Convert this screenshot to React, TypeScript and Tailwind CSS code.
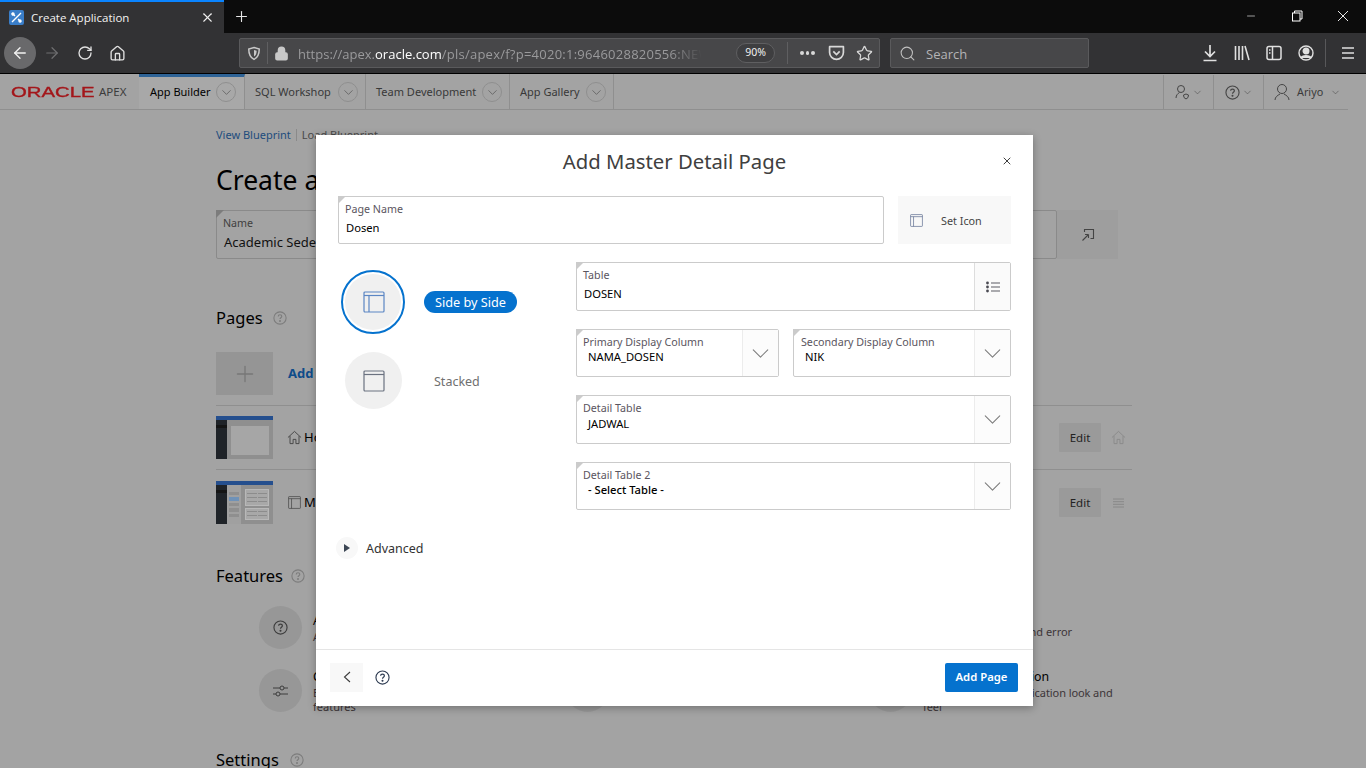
import React from "react";
import { ArrowLeft, ArrowRight, RotateCw, Home, Lock, Search, Star, Plus, X, ChevronDown, Minus } from "lucide-react";

const LayoutIcon = ({ side = true, size = 22, color = "#5f7fb3", className = "" }: { side?: boolean; size?: number; color?: string; className?: string }) => (
  <svg width={size} height={size} viewBox="0 0 22 22" fill="none" stroke={color} strokeWidth="1.2" className={className}>
    <rect x="1" y="1" width="20" height="20" rx="1" />
    <path d="M1 4.500h20" />
    {side && <path d="M6 4.500V21" />}
  </svg>
);

const HelpIcon = ({ size = 16, color = "#3f4a5a", className = "" }: { size?: number; color?: string; className?: string }) => (
  <svg width={size} height={size} viewBox="0 0 16 16" fill="none" stroke={color} strokeWidth="1.2" className={className}>
    <circle cx="8" cy="8" r="7" />
    <path d="M6 6.200c0-1.200 1-1.900 2-1.900s2 .7 2 1.800c0 1.500-2 1.600-2 3.100" strokeWidth="1.300" />
    <circle cx="8" cy="11.500" r=".5" fill={color} />
  </svg>
);

const HomeOutline = ({ color, size = 15 }: { color: string; size?: number }) => (
  <svg width={size} height={size} viewBox="0 0 16 16" fill="none" stroke={color} strokeWidth="1">
    <path d="M1 8l7-6.500L15 8M3.200 6.500V14.500h3.300V10h3v4.500h3.300V6.500" />
  </svg>
);

const Field = ({ label, value, indent = 1, className = "", select = false, list = false, valueGap = 4, labelX = 6, medium = false }: { label: string; value: string; indent?: number; className?: string; select?: boolean; list?: boolean; valueGap?: number; labelX?: number; medium?: boolean }) => (
  <div className={`relative flex border border-[#cbcbcb] rounded-[2px] bg-white ${className}`}>
    <span className="absolute -left-px -top-px w-0 h-0 border-t-[8px] border-r-[8px] border-t-[#cbcbcb] border-r-transparent" />
    <div className="flex-1 min-w-0" style={{ paddingLeft: labelX }}>
      <div className="text-[10.700px] leading-[14px] text-[#5a5560] mt-[5px] whitespace-nowrap">{label}</div>
      <div className={`text-[11.200px] leading-[16px] text-black whitespace-nowrap ${medium ? "font-medium" : "font-normal"}`} style={{ marginLeft: indent, marginTop: valueGap }}>{value}</div>
    </div>
    {select && (
      <div className="w-[36px] shrink-0 border-l border-[#ececec] bg-[#fcfcfc] flex items-center justify-center">
        <ChevronDown size={29} strokeWidth={0.85} color="#7a7a7a" />
      </div>
    )}
    {list && (
      <div className="w-[36px] shrink-0 border-l border-[#dddddd] bg-[#fafafa] flex items-center justify-center">
        <svg width="14" height="12" viewBox="0 0 14 12" fill="none">
          <circle cx="1.500" cy="2" r="1.400" fill="#4a4a52" /><circle cx="1.500" cy="6" r="1.400" fill="#4a4a52" /><circle cx="1.500" cy="10" r="1.400" fill="#4a4a52" />
          <path d="M5 2h9M5 6h9M5 10h9" stroke="#5a5a62" strokeWidth="1" />
        </svg>
      </div>
    )}
  </div>
);

const NavTab = ({ label, active = false, w }: { label: string; active?: boolean; w: string }) => (
  <div className={`flex items-center border-r border-[#8f8f8f] ${w} h-full pl-[10px] pb-[2px] ${active ? "border-t-[3px] border-t-[#2e6396] bg-[#a8a8a8]" : "pt-[3px]"}`}>
    <span className={`text-[11px] whitespace-nowrap ${active ? "text-black" : "text-[#383838]"}`}>{label}</span>
    <span className={`ml-auto ${active ? "mr-[8px]" : "mr-[7px]"} w-[20px] h-[20px] rounded-full border border-[#8f8f8f] flex items-center justify-center`}>
      <ChevronDown size={15} strokeWidth={1} color="#4a4a4a" />
    </span>
  </div>
);

const Feature = ({ icon, title, desc, w, shift = "" }: { icon: React.ReactNode; title: string; desc: React.ReactNode; w: string; shift?: string }) => (
  <div className={`flex items-center h-[43px] ${w}`}>
    <div className="w-[43px] h-[43px] rounded-full bg-[#979797] flex items-center justify-center shrink-0">{icon}</div>
    <div className={`ml-[11px] pt-[2px] text-[11px] leading-[14px] text-[#3d3538] ${shift}`}>
      <div className="text-[12.300px] leading-[16px] mb-[1px] text-black whitespace-nowrap">{title}</div>
      <div className="whitespace-nowrap">{desc}</div>
    </div>
  </div>
);

const TableBox = ({ rows }: { rows: number }) => (
  <div className="bg-[#a8a8a8] border border-[#b8b8b8] p-[1px] flex flex-col justify-around" style={{ flex: rows }}>
    {Array.from({ length: rows }).map((_, i) => (
      <div key={i} className="flex gap-[1px]"><i className="flex-1 h-px bg-[#8c8c8c]" /><i className="flex-1 h-px bg-[#8c8c8c]" /></div>
    ))}
  </div>
);

const Thumb = ({ detail = false }: { detail?: boolean }) => (
  <div className="w-[57px] h-[43px] flex flex-col shrink-0 bg-[#8f8f8f]">
    <div className="h-[4px] bg-[#254f8e]" />
    <div className="flex flex-1">
      <div className="w-[11px] bg-[#1f2328] pt-[5px]"><div className="h-[3px] bg-[#141414]" /></div>
      {detail ? (
        <div className="flex-1 flex bg-[#9a9a9a]">
          <div className="w-[14px] bg-[#a0a0a0] px-[2px] pt-[7px] flex flex-col gap-[2px]">
            <div className="h-[3px] bg-[#8f8f8f]" /><div className="h-[4px] bg-[#6f92b8]" /><div className="h-[3px] bg-[#8f8f8f]" /><div className="h-[4px] bg-[#8f8f8f]" /><div className="h-[3px] bg-[#8f8f8f]" />
          </div>
          <div className="flex-1 p-[4px] flex flex-col gap-[2px] bg-[#8f8f8f]">
            <TableBox rows={3} />
            <TableBox rows={2} />
          </div>
        </div>
      ) : (
        <div className="flex-1 p-[4px] pt-[6px]"><div className="h-full bg-[#a6a6a6]" /></div>
      )}
    </div>
  </div>
);

export default function App() {
  return (
    <div className="w-[1366px] h-[768px] overflow-hidden relative bg-[#a3a3a3]" style={{ fontFamily: '"Noto Sans", sans-serif' }}>
      {/* Tab strip */}
      <div className="h-[33px] bg-[#0c0c0c] flex items-stretch">
        <div className="w-[224px] bg-[#323234] border-t-2 border-[#0a84ff] flex items-center pl-[9px]">
          <span className="w-[15px] h-[15px] bg-[#3a7ec9] rounded-[2px] flex items-center justify-center">
            <svg width="13" height="13" viewBox="0 0 13 13" fill="none" stroke="#fff" strokeWidth="1.400"><path d="M2 11L11 2M2 2l3 3M8 8l3 3" /><circle cx="3" cy="3" r="1" /><circle cx="10" cy="10" r="1" /></svg>
          </span>
          <span className="ml-[7px] text-[11.500px] text-[#f2f2f2] whitespace-nowrap" style={{ fontFamily: '"Open Sans", sans-serif' }}>Create Application</span>
          <X size={15} strokeWidth={1.700} color="#f0f0f0" className="ml-auto mr-[9px]" />
        </div>
        <div className="w-[36px] flex items-center justify-center -mt-[1px] -ml-[1px]"><Plus size={17} strokeWidth={1.600} color="#e6e6e6" /></div>
        <div className="ml-auto flex items-center h-full pr-[17px] -mt-[1px]">
          <Minus size={12} strokeWidth={1.200} color="#fff" />
          <svg width="12" height="12" viewBox="0 0 12 12" fill="none" stroke="#fff" strokeWidth="1" className="ml-[34px]"><rect x="1.500" y="3" width="7.500" height="8" /><path d="M3.500 3V1h7.500v8H9" /></svg>
          <svg width="12" height="12" viewBox="0 0 12 12" fill="none" stroke="#fff" strokeWidth="0.900" className="ml-[34px]"><path d="M1 1l10 10M11 1L1 11" /></svg>
        </div>
      </div>

      {/* Browser toolbar */}
      <div className="h-[41px] bg-[#323234] border-b border-black flex items-center text-[#d8d8d8]">
        <div className="ml-[4px] w-[32px] h-[32px] rounded-full bg-[#69696b] flex items-center justify-center shrink-0"><ArrowLeft size={18} strokeWidth={1.800} color="#f2f2f2" /></div>
        <ArrowRight size={18} strokeWidth={1.600} color="#6f6f71" className="ml-[7px] shrink-0" />
        <RotateCw size={16} strokeWidth={2} color="#e0e0e0" className="ml-[16px] shrink-0" />
        <Home size={17} strokeWidth={1.900} color="#e0e0e0" className="ml-[16px] shrink-0" />
        <div className="ml-[113px] w-[641px] h-[30px] bg-[#474749] border border-[#5a5a5c] rounded-[2px] flex items-center shrink-0">
          <svg width="14" height="15" viewBox="0 0 16 16" fill="none" stroke="#c8c8c8" strokeWidth="1.700" className="ml-[7px] shrink-0"><path d="M8 1.200l6 1.600c0 5-1 9.500-6 12-5-2.500-6-7-6-12z" /><path d="M8 4l3 .8c0 3-.6 5.200-3 6.600z" fill="#c8c8c8" stroke="none" /></svg>
          <span className="w-px h-[22px] bg-[#5f5f61] ml-[6px]" />
          <Lock size={15} strokeWidth={2.200} color="#c8c8c8" fill="#c8c8c8" className="ml-[6px] shrink-0" />
          <div className="ml-[9px] w-[404px] overflow-hidden whitespace-nowrap text-[13px] leading-[20px] pt-[2px] text-[#9a9a9c]" style={{ fontFamily: '"Open Sans", sans-serif', maskImage: "linear-gradient(to right, #000 92%, transparent)" }}>
            https://apex.<span className="text-white">oracle.com</span><span className="tracking-[0.25px]">/pls/apex/f?p=4020:1:9646028820556:NEW</span>
          </div>
          <div className="ml-[34px] w-[39px] h-[20px] rounded-full border border-[#5f5f61] bg-[#3e3e40] flex items-center justify-center text-[10.500px] text-[#f0f0f0] shrink-0">90%</div>
          <span className="w-px h-[22px] bg-[#5f5f61] ml-[12px]" />
          <div className="ml-[12px] flex gap-[2px] shrink-0"><i className="w-[3.500px] h-[3.500px] rounded-full bg-[#d8d8d8]" /><i className="w-[3.500px] h-[3.500px] rounded-full bg-[#d8d8d8]" /><i className="w-[3.500px] h-[3.500px] rounded-full bg-[#d8d8d8]" /></div>
          <svg width="17" height="16" viewBox="0 0 16 15" fill="none" stroke="#d8d8d8" strokeWidth="1.600" className="ml-[13px] shrink-0"><path d="M1.500 1.500h13v5.500c0 3.500-3 6.500-6.500 6.500S1.500 10.500 1.500 7z" strokeLinejoin="round" /><path d="M5 6l3 3 3-3" /></svg>
          <Star size={17} strokeWidth={1.800} color="#d8d8d8" className="ml-[11px] shrink-0" />
        </div>
        <div className="ml-[10px] w-[199px] h-[30px] bg-[#474749] border border-[#5a5a5c] rounded-[2px] flex items-center shrink-0">
          <Search size={17} strokeWidth={1.500} color="#c0c0c0" className="ml-[8px]" />
          <span className="ml-[10px] text-[13px] leading-[20px] pt-[2px] text-[#b4b4b6]" style={{ fontFamily: '"Open Sans", sans-serif' }}>Search</span>
        </div>
        <svg width="16" height="18" viewBox="0 0 16 18" fill="none" stroke="#e0e0e0" strokeWidth="1.700" className="ml-[113px] shrink-0"><path d="M8 1v11M3 7.500l5 5 5-5M1.500 16.500h13" /></svg>
        <svg width="16" height="16" viewBox="0 0 16 16" fill="none" stroke="#e0e0e0" strokeWidth="1.600" className="ml-[16px] shrink-0"><path d="M1.500 1v14M5 1v14M8.500 1v14M11 1l4 14" /></svg>
        <svg width="16" height="16" viewBox="0 0 16 16" fill="none" stroke="#e0e0e0" strokeWidth="1.500" className="ml-[16px] shrink-0"><rect x="1" y="1.500" width="14" height="13" rx="2" /><path d="M6.500 1.500v13M3 5h1.500M3 8h1.500" /></svg>
        <svg width="16" height="16" viewBox="0 0 16 16" fill="none" stroke="#e0e0e0" strokeWidth="1.400" className="ml-[16px] shrink-0"><circle cx="8" cy="8" r="7" /><circle cx="8" cy="6" r="2.800" fill="#e0e0e0" /><path d="M3 13c1-3 9-3 10 0" fill="#e0e0e0" /></svg>
        <span className="w-px h-[28px] bg-[#58585a] ml-[11px] shrink-0" />
        <svg width="14" height="14" viewBox="0 0 14 14" fill="none" stroke="#e0e0e0" strokeWidth="1.700" className="ml-[15px] shrink-0"><path d="M1 2h12M1 7h12M1 12h12" /></svg>
      </div>

      {/* App header */}
      <div className="h-[36px] w-[1348px] border-b border-[#8f8f8f] flex items-stretch">
        <div className="w-[139px] flex items-center pl-[11px] shrink-0">
          <span className="w-[83px] shrink-0 inline-block text-[14px] leading-none text-[#a3161a] scale-x-[1.45] origin-left whitespace-nowrap [-webkit-text-stroke:0.35px_#a3161a]" style={{ fontFamily: '"Liberation Sans", sans-serif' }}>ORACLE</span>
          <span className="ml-[5px] text-[11.500px] leading-none text-[#3c3c3c] whitespace-nowrap">APEX</span>
        </div>
        <NavTab label="App Builder" active w="w-[106px] pl-[11px]" />
        <NavTab label="SQL Workshop" w="w-[121px]" />
        <NavTab label="Team Development" w="w-[144px]" />
        <NavTab label="App Gallery" w="w-[104px]" />
        <div className="ml-auto flex items-stretch pt-[1px]">
          <div className="w-[50px] border-l border-[#8f8f8f] flex items-center justify-center gap-[2px]">
            <svg width="15" height="16" viewBox="0 0 15 16" fill="none" stroke="#454545" strokeWidth="1"><circle cx="6" cy="5" r="3.500" /><path d="M1 14c0-3 2-4.500 3.500-5.500M11 10l2.500 1-.5 2.500-2 1.500-2-1.500-.5-2.500z" /></svg>
            <ChevronDown size={11} strokeWidth={1.200} color="#454545" />
          </div>
          <div className="w-[50px] border-l border-[#8f8f8f] flex items-center justify-center gap-[2px]"><HelpIcon size={15} color="#454545" /><ChevronDown size={11} strokeWidth={1.200} color="#454545" /></div>
          <div className="w-[85px] border-l border-[#8f8f8f] flex items-center pl-[8px]">
            <svg width="20" height="20" viewBox="0 0 20 20" fill="none" stroke="#454545" strokeWidth="1"><circle cx="10" cy="7" r="4.500" /><path d="M3 18c0-3 2.500-4.500 5-6M17 18c0-3-2.500-4.500-5-6" /></svg>
            <span className="ml-[5px] text-[10.800px] text-[#3a3a3a]">Ariyo</span>
            <ChevronDown size={11} strokeWidth={1.200} color="#454545" className="ml-[7px]" />
          </div>
        </div>
      </div>

      {/* Dimmed page */}
      <main className="pl-[216px] w-[1132px] box-content">
        <div className="w-[916px]">
          <div className="mt-[17px] h-[16px] flex items-center text-[11px] text-[#1d4c7d]">
            View Blueprint<span className="w-px h-[12px] bg-[#8a8a8a] mx-[5px]" /><span className="text-[#4a4a4a]">Load Blueprint</span>
          </div>
          <div className="mt-[17px] h-[40px] text-[26.500px] leading-[40px] text-black">Create a</div>
          <div className="mt-[10px] flex">
            <div className="relative w-[841px] h-[49px] border border-[#8a8a8a] rounded-[2px] pl-[6px] pt-[5px]">
              <span className="absolute -left-px -top-px w-0 h-0 border-t-[8px] border-r-[8px] border-t-[#7c7c7c] border-r-transparent" />
              <div className="text-[10.700px] leading-[14px] text-[#404040]">Name</div>
              <div className="text-[13px] leading-[20px] mt-[2px] ml-[1px] text-[#111]">Academic Sede</div>
            </div>
            <div className="w-[61px] h-[49px] bg-[#9e9e9e] flex items-center justify-center">
              <svg width="14" height="14" viewBox="0 0 14 14" fill="none" stroke="#444" strokeWidth="1.100"><path d="M3.500 4V1.500h9v9H9.500M1.500 12.500L7.500 6.500M7.500 6.500H4M7.500 6.500V10" /></svg>
            </div>
          </div>
          <div className="mt-[47px] h-[24px] flex items-center text-[16.500px] text-black">Pages<HelpIcon size={14} color="#7c7c7c" className="ml-[10px]" /></div>
          <div className="mt-[22px] h-[43px] flex items-center">
            <div className="w-[57px] h-[43px] bg-[#959595] flex items-center justify-center"><Plus size={26} strokeWidth={1.200} color="#777" /></div>
            <span className="ml-[15px] text-[13px] font-bold text-[#0f4c8a]">Add</span>
          </div>
          <div className="mt-[10px] h-px bg-[#8f8f8f]" />
          <div className="mt-[10px] h-[43px] flex items-center">
            <Thumb />
            <span className="ml-[14px]"><HomeOutline color="#444" /></span>
            <span className="ml-[2px] text-[13px] text-black flex-1">Home</span>
            <span className="w-[42px] h-[29px] bg-[#9a9a9a] rounded-[1px] flex items-center justify-center text-[11.500px] text-[#222]">Edit</span>
            <span className="ml-[10px] w-[15px]"><HomeOutline color="#8a8a8a" /></span>
            <span className="w-[6px]" />
          </div>
          <div className="mt-[10px] h-px bg-[#8f8f8f]" />
          <div className="mt-[11px] h-[43px] flex items-center">
            <Thumb detail />
            <LayoutIcon size={13} color="#444" className="ml-[15px]" />
            <span className="ml-[3px] text-[13px] text-black flex-1">Master</span>
            <span className="w-[42px] h-[29px] bg-[#9a9a9a] rounded-[1px] flex items-center justify-center text-[11.500px] text-[#222]">Edit</span>
            <svg width="11" height="10" viewBox="0 0 11 10" stroke="#888" strokeWidth="1" className="ml-[12px]"><path d="M0 1h11M0 3.700h11M0 6.300h11M0 9h11" /></svg>
            <span className="w-[8px]" />
          </div>
          <div className="mt-[40px] h-[24px] flex items-center text-[16.500px] text-black">Features<HelpIcon size={14} color="#7c7c7c" className="ml-[8px]" /></div>
          <div className="mt-[18px] pl-[43px] flex flex-col gap-[20px]">
            <div className="flex">
              <Feature w="w-[307px]" title="About Page" desc="About this application" icon={<HelpIcon size={15} color="#3c3c3c" />} />
              <Feature w="w-[303px]" title="Access Control" desc="Role based" icon={<span />} />
              <Feature w="w-[250px]" title="Activity Reporting" shift="mt-[4px]" desc={<>Usage reports logs and error<br />reports</>} icon={<span />} />
            </div>
            <div className="flex">
              <Feature w="w-[307px]" title="Configuration Options" desc={<>Enable end users to turn on or off<br />features</>} icon={
                <svg width="15" height="14" viewBox="0 0 15 14" fill="none" stroke="#3c3c3c" strokeWidth="1"><path d="M0 4h7M11 4h4M0 10h3M7 10h8" /><circle cx="9" cy="4" r="2" /><circle cx="5" cy="10" r="2" /></svg>
              } />
              <Feature w="w-[303px]" title="Feedback" desc="Collect feedback" icon={<span />} />
              <Feature w="w-[250px]" title="Theme Style Selection" desc={<span className="tracking-[-0.08px]">Define your own application look and<br />feel</span>} icon={<span />} />
            </div>
          </div>
          <div className="mt-[36px] h-[24px] flex items-center text-[16.500px] text-black whitespace-nowrap">Settings<HelpIcon size={14} color="#7c7c7c" className="ml-[11px]" /></div>
        </div>
      </main>

      {/* Dialog */}
      <div className="absolute left-[316px] top-[135px] w-[717px] h-[571px] bg-white flex flex-col shadow-[0_2px_8px_rgba(0,0,0,0.3)]">
        <div className="h-[61px] shrink-0 grid grid-cols-[1fr_auto_1fr] items-center">
          <span />
          <h1 className="text-[20.300px] font-normal text-[#404040] -mt-[9px]">Add Master Detail Page</h1>
          <span className="flex justify-end pr-[20px] -mt-[10px]"><X size={12} strokeWidth={2} color="#404040" /></span>
        </div>
        <div className="px-[22px]">
          <div className="flex gap-[14px]">
            <Field label="Page Name" value="Dosen" className="w-[546px] h-[48px]" />
            <div className="w-[113px] h-[48px] bg-[#f8f8f8] flex items-center pl-[12px]">
              <LayoutIcon size={13} color="#5f6f90" />
              <span className="ml-[18px] pt-[2px] text-[10.800px] text-[#444]">Set Icon</span>
            </div>
          </div>
          <div className="mt-[18px] flex">
            <div className="w-[238px] shrink-0">
              <div className="flex items-center ml-[3px] mt-[8px]">
                <div className="w-[64px] h-[64px] rounded-full border-2 border-[#0572ce] p-[2px]">
                  <div className="w-full h-full rounded-full bg-[#f0f0f0] flex items-center justify-center"><LayoutIcon color="#5b86c4" className="ml-px -mt-px" /></div>
                </div>
                <span className="ml-[19px] h-[22px] w-[93px] pt-[1px] rounded-full bg-[#0572ce] text-white text-[12.700px] flex items-center justify-center">Side by Side</span>
              </div>
              <div className="flex items-center ml-[7px] mt-[18px]">
                <div className="w-[57px] h-[57px] rounded-full bg-[#f0f0f0] flex items-center justify-center"><LayoutIcon side={false} color="#6b7280" /></div>
                <span className="ml-[32px] pt-[4px] text-[12.500px] text-[#707070]">Stacked</span>
              </div>
            </div>
            <div className="flex-1 flex flex-col">
              <Field label="Table" value="DOSEN" list className="h-[49px]" />
              <div className="mt-[18px] flex gap-[14px]">
                <Field label="Primary Display Column" value="NAMA_DOSEN" indent={5} select valueGap={0} className="w-[203px] h-[48px]" />
                <Field label="Secondary Display Column" value="NIK" indent={4} labelX={7} select valueGap={0} className="w-[218px] h-[48px]" />
              </div>
              <Field label="Detail Table" value="JADWAL" indent={5} select valueGap={1} className="mt-[18px] h-[49px]" />
              <Field label="Detail Table 2" value="- Select Table -" indent={5} select valueGap={0} medium className="mt-[18px] h-[48px]" />
            </div>
          </div>
          <div className="ml-[-2px] flex items-center mt-[27px]">
            <span className="w-[22px] h-[22px] rounded-full bg-[#f8f8f8] flex items-center justify-center">
              <svg width="6" height="8" viewBox="0 0 6 8" fill="#3c4654"><path d="M0 0l6 4-6 4z" /></svg>
            </span>
            <span className="ml-[8px] pt-[2px] text-[12.500px] text-[#333]">Advanced</span>
          </div>
        </div>
        <div className="mt-auto h-[57px] pb-[2px] border-t border-[#e5e5e5] flex items-center pl-[14px] pr-[15px]">
          <span className="w-[33px] h-[29px] bg-[#f8f8f8] flex items-center justify-center">
            <svg width="8" height="12" viewBox="0 0 8 12" fill="none" stroke="#3c3c3c" strokeWidth="1.100"><path d="M7 1L1.500 6 7 11" /></svg>
          </span>
          <HelpIcon size={15} color="#2c3a50" className="ml-[12px] mt-[1px]" />
          <span className="ml-auto w-[73px] h-[29px] pt-[1px] bg-[#0572ce] rounded-[2px] text-white text-[11.300px] font-semibold flex items-center justify-center">Add Page</span>
        </div>
      </div>
    </div>
  );
}
